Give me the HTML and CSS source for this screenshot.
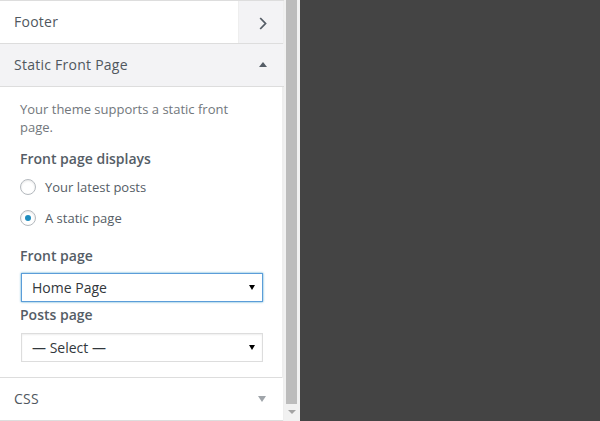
FILE: index.html
```html
<!DOCTYPE html>
<html>
<head>
<meta charset="utf-8">
<link rel="stylesheet" href="styles.css">
</head>
<body>
<div class="app">
  <div class="sidebar">
    <div class="controls">
      <div class="row row-panel">
        <span class="row-title">Footer</span>
        <span class="panel-go">
          <svg width="8" height="13" viewBox="0 0 8 13"><path d="M1.2 1 L6.5 6.5 L1.2 12" fill="none" stroke="#555d66" stroke-width="1.8"/></svg>
        </span>
      </div>
      <div class="row row-open">
        <span class="row-title">Static Front Page</span>
        <span class="tri tri-up"></span>
      </div>
      <div class="section-content">
        <p class="desc">Your theme supports a static front page.</p>
        <div class="ctl-title first">Front page displays</div>
        <div class="radio-row"><span class="radio"></span><span class="radio-label">Your latest posts</span></div>
        <div class="radio-row"><span class="radio checked"></span><span class="radio-label">A static page</span></div>
        <div class="ctl-title second">Front page</div>
        <div class="select focus"><span class="select-text">Home Page</span><span class="caret"></span></div>
        <div class="ctl-title third">Posts page</div>
        <div class="select"><span class="select-text">— Select —</span><span class="caret"></span></div>
      </div>
      <div class="row row-closed">
        <span class="row-title">CSS</span>
        <span class="tri tri-down"></span>
      </div>
    </div>
    <div class="scrollbar">
      <div class="thumb"></div>
      <div class="sb-arrow"></div>
    </div>
  </div>
  <div class="preview"></div>
</div>
</body>
</html>
```
FILE: styles.css
```css
html, body {
  margin: 0;
  padding: 0;
}
body {
  background: #444444;
  font-family: "Open Sans", "Noto Sans", sans-serif;
  color: #555d66;
}
.app {
  display: flex;
  width: 600px;
  height: 421px;
  overflow: hidden;
}
.sidebar {
  display: flex;
  width: 300px;
  height: 421px;
  flex: none;
}
.controls {
  width: 284px;
  background: #eeeeee;
  border-top: 1px solid #dddddd;
  box-sizing: border-box;
  height: 421px;
}
.preview {
  flex: 1;
  background: #444444;
}
.row {
  display: flex;
  align-items: stretch;
  height: 42px;
  border-bottom: 1px solid #dddddd;
  background: #ffffff;
  width: 283px;
}
.row-title {
  flex: 1;
  padding: 10px 10px 11px 14px;
  font-size: 14px;
  line-height: 21px;
  letter-spacing: 0.25px;
  color: #50575e;
}
.row-panel .row-title {
  background: #ffffff;
}
.panel-go {
  width: 45px;
  background: #f3f3f5;
  border-left: 1px solid #eeeeee;
  display: flex;
  align-items: center;
  justify-content: center;
  padding-left: 4px;
  padding-top: 2px;
  box-sizing: border-box;
}
.row-open {
  background: #f3f3f5;
  width: 284px;
}
.tri {
  width: 0;
  height: 0;
  align-self: center;
  margin-right: 17px;
  border-left: 4px solid transparent;
  border-right: 4px solid transparent;
}
.tri-up {
  border-bottom: 5px solid #555d66;
  margin-top: -1px;
}
.tri-down {
  border-top: 6px solid #a0a5aa;
}
.section-content {
  width: 282px;
  box-sizing: border-box;
  height: 291px;
  background: #ffffff;
  border-bottom: 1px solid #dddddd;
  padding: 13px 20px 0 20px;
}
.row-closed {
  width: 283px;
}
.desc {
  margin: 0;
  font-size: 13px;
  line-height: 18px;
  color: #72777c;
}
.ctl-title {
  font-size: 14px;
  line-height: 24px;
  font-weight: 600;
  color: #555d66;
}
.ctl-title.first {
  margin-top: 11px;
}
.ctl-title.second {
  margin-top: 18px;
}
.ctl-title.third {
  margin-top: 1px;
}
.radio-row {
  display: flex;
  align-items: center;
  height: 16px;
  margin-top: 8px;
}
.radio-row + .radio-row {
  margin-top: 15px;
}
.radio {
  width: 16px;
  height: 16px;
  box-sizing: border-box;
  border: 1px solid #b4b9be;
  border-radius: 50%;
  background: #ffffff;
  box-shadow: inset 0 1px 2px rgba(0, 0, 0, 0.1);
  display: flex;
  align-items: center;
  justify-content: center;
  flex: none;
}
.radio.checked::before {
  content: "";
  width: 6px;
  height: 6px;
  border-radius: 50%;
  background: #1e8cbe;
}
.radio-label {
  margin-left: 9px;
  font-size: 13px;
  line-height: 16px;
  color: #555d66;
}
.select {
  display: flex;
  align-items: center;
  width: 242px;
  height: 29px;
  margin-left: 1px;
  box-sizing: border-box;
  border: 1px solid #dddddd;
  box-shadow: inset 0 1px 2px rgba(0, 0, 0, 0.07);
  background: #ffffff;
  padding: 0 7px 0 10px;
  margin-top: 5px;
}
.select.focus {
  border-color: #5b9dd9;
  box-shadow: 0 0 2px rgba(30, 140, 190, 0.8);
}
.ctl-title.third + .select {
  margin-top: 6px;
}
.select-text {
  flex: 1;
  font-size: 14px;
  line-height: 20px;
  color: #32373c;
}
.caret {
  width: 0;
  height: 0;
  border-left: 3px solid transparent;
  border-right: 3px solid transparent;
  border-top: 5px solid #000000;
}
.scrollbar {
  width: 16px;
  height: 421px;
  background: #f1f1f1;
  display: flex;
  flex-direction: column;
  align-items: center;
}
.thumb {
  width: 11px;
  height: 404px;
  background: #bcbcbc;
  margin-left: -1px;
}
.sb-arrow {
  margin-top: 6px;
  width: 0;
  height: 0;
  border-left: 4px solid transparent;
  border-right: 4px solid transparent;
  border-top: 4px solid #a3a3a3;
}
```
